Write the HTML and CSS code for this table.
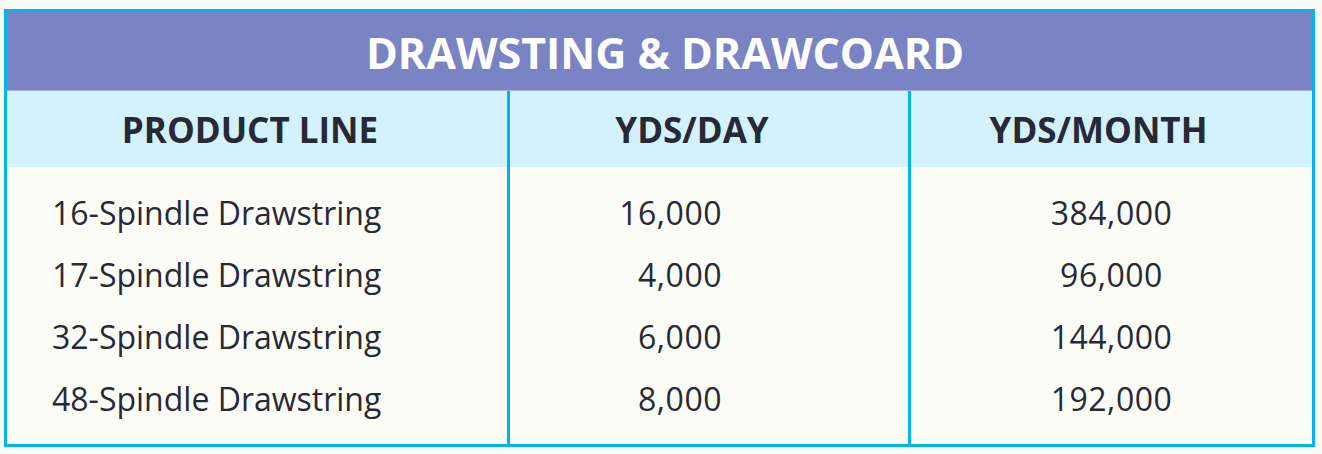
FILE: index.html
```html
<!DOCTYPE html>
<html>
<head>
<meta charset="utf-8">
<link rel="stylesheet" href="styles.css">
</head>
<body>
<div class="table">
  <div class="title">DRAWSTING &amp; DRAWCOARD</div>
  <div class="cols">
    <div class="col col-1">
      <div class="head">PRODUCT LINE</div>
      <div class="data">
        <div class="cell">16-Spindle Drawstring</div>
        <div class="cell">17-Spindle Drawstring</div>
        <div class="cell">32-Spindle Drawstring</div>
        <div class="cell">48-Spindle Drawstring</div>
      </div>
    </div>
    <div class="col col-2">
      <div class="head">YDS/DAY</div>
      <div class="data">
        <div class="cell">16,000</div>
        <div class="cell">4,000</div>
        <div class="cell">6,000</div>
        <div class="cell">8,000</div>
      </div>
    </div>
    <div class="col col-3">
      <div class="head">YDS/MONTH</div>
      <div class="data">
        <div class="cell">384,000</div>
        <div class="cell">96,000</div>
        <div class="cell">144,000</div>
        <div class="cell">192,000</div>
      </div>
    </div>
  </div>
</div>
</body>
</html>
```
FILE: styles.css
```css
html, body {
  margin: 0;
  padding: 0;
  background: #f9faf4;
}
body {
  font-family: "Open Sans", "Liberation Sans", sans-serif;
  color: #272935;
}
.table {
  margin: 9px 0 0 4px;
  width: 1305px;
  border: 3px solid #00b4ef;
  background: #fbfcf5;
}
.title {
  height: 79px;
  background: #7a83c4;
  color: #ffffff;
  font-weight: 700;
  font-size: 43px;
  display: flex;
  align-items: center;
  justify-content: center;
  padding-left: 11px;
  padding-top: 2px;
  border-bottom: 1px solid #a7b3e0;
  box-sizing: border-box;
}
.cols {
  display: grid;
  grid-template-columns: 500px 401px 1fr;
}
.col-2, .col-3 {
  border-left: 3px solid #00b4ef;
}
.head {
  height: 76px;
  background: #d4f2fd;
  display: flex;
  align-items: center;
  justify-content: center;
  font-weight: 700;
  font-size: 35px;
}
.col-1 .head { padding-right: 14px; }
.col-2 .head { padding-right: 34px; }
.col-3 .head { padding-right: 26px; }
.data {
  padding: 14px 0 15px;
}
.cell {
  height: 62px;
  display: flex;
  align-items: center;
  font-size: 32px;
}
.col-1 .cell { padding-left: 45px; }
.col-2 .cell { justify-content: flex-end; padding-right: 186px; letter-spacing: 0.5px; }
.col-3 .cell { justify-content: center; letter-spacing: 0.5px; }
```
